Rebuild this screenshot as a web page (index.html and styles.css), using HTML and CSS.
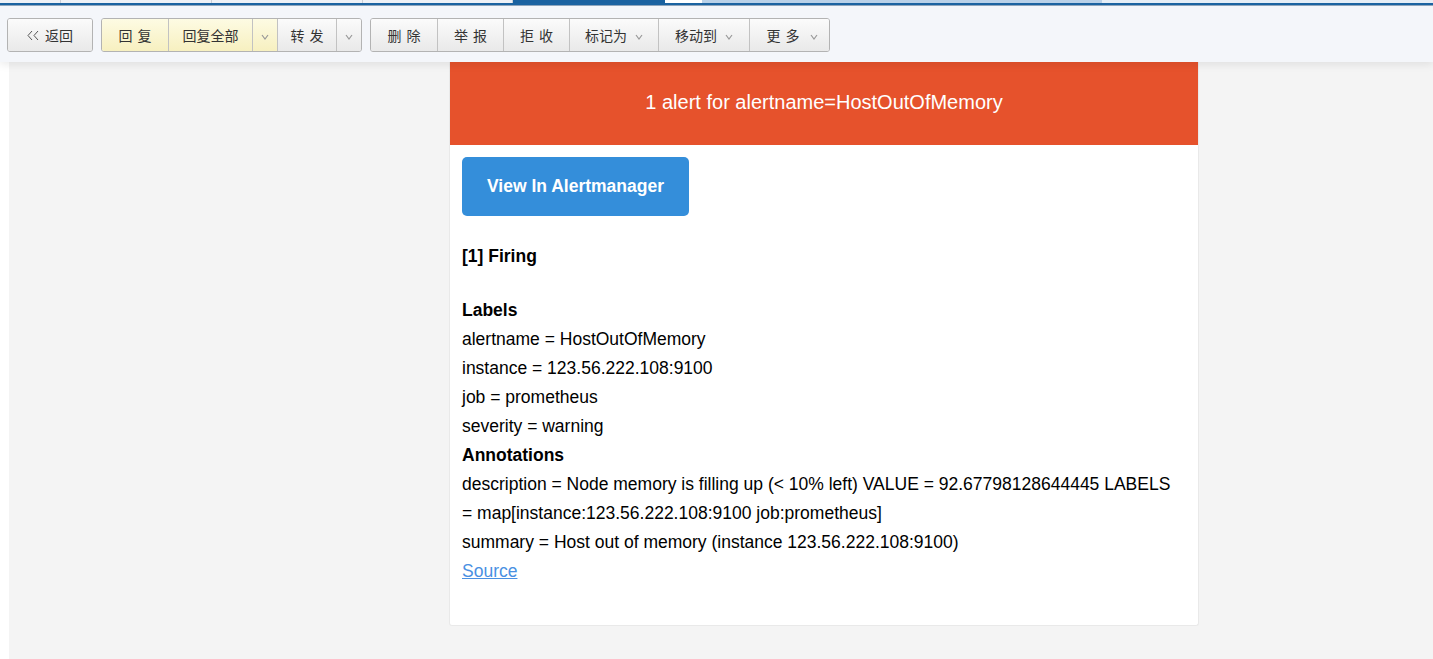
FILE: index.html
```html
<!DOCTYPE html>
<html lang="zh-CN">
<head>
<meta charset="utf-8">
<title>邮件</title>
<link rel="stylesheet" href="styles.css">
</head>
<body>
<div class="topbar">
  <div class="tabs">
    <span class="tab t1"></span>
    <span class="tab t2"></span>
    <span class="tab t3"></span>
    <span class="tab t4"></span>
    <span class="tab active"></span>
    <span class="tab white"></span>
    <span class="tab light"></span>
    <span class="tab rest"></span>
  </div>
  <div class="blueline"></div>
  <div class="toolbar">
    <div class="group">
      <button class="btn back"><svg class="chev" width="12" height="11" viewBox="0 0 12 11"><polyline points="5,1 1,5.5 5,10" fill="none" stroke="#555" stroke-width="1"/><polyline points="11,1 7,5.5 11,10" fill="none" stroke="#555" stroke-width="1"/></svg>返回</button>
    </div>
    <div class="group">
      <button class="btn yellow sp w66">回复</button>
      <button class="btn yellow w84">回复全部</button>
      <button class="btn yellow caret-only w25"><svg class="caret" width="8" height="6" viewBox="0 0 8 6"><polyline points="1,1 4,5 7,1" fill="none" stroke="#999" stroke-width="1.2"/></svg></button>
      <button class="btn sp w59">转发</button>
      <button class="btn caret-only w25"><svg class="caret" width="8" height="6" viewBox="0 0 8 6"><polyline points="1,1 4,5 7,1" fill="none" stroke="#999" stroke-width="1.2"/></svg></button>
    </div>
    <div class="group">
      <button class="btn sp w66">删除</button>
      <button class="btn sp w66">举报</button>
      <button class="btn sp w66">拒收</button>
      <button class="btn w89">标记为<svg class="caret" width="8" height="6" viewBox="0 0 8 6"><polyline points="1,1 4,5 7,1" fill="none" stroke="#999" stroke-width="1.2"/></svg></button>
      <button class="btn w91">移动到<svg class="caret" width="8" height="6" viewBox="0 0 8 6"><polyline points="1,1 4,5 7,1" fill="none" stroke="#999" stroke-width="1.2"/></svg></button>
      <button class="btn sp w80">更多<svg class="caret" width="8" height="6" viewBox="0 0 8 6"><polyline points="1,1 4,5 7,1" fill="none" stroke="#999" stroke-width="1.2"/></svg></button>
    </div>
  </div>
</div>
<div class="main">
  <div class="card">
    <div class="card-head">1 alert for alertname=HostOutOfMemory</div>
    <div class="card-body">
      <a class="cta" href="#">View In Alertmanager</a>
      <p class="firing"><strong>[1] Firing</strong></p>
      <div class="details">
        <strong>Labels</strong><br>
        alertname = HostOutOfMemory<br>
        instance = 123.56.222.108:9100<br>
        job = prometheus<br>
        severity = warning<br>
        <strong>Annotations</strong><br>
        description = Node memory is filling up (&lt; 10% left) VALUE = 92.67798128644445 LABELS = map[instance:123.56.222.108:9100 job:prometheus]<br>
        summary = Host out of memory (instance 123.56.222.108:9100)<br>
        <a class="src" href="#">Source</a>
      </div>
    </div>
  </div>
</div>
</body>
</html>
```
FILE: styles.css
```css
* { box-sizing: border-box; }
html, body { margin: 0; padding: 0; }
body {
  background: #fff;
  font-family: "Liberation Sans", Arial, "Noto Sans CJK SC", sans-serif;
  width: 1433px;
  height: 659px;
  overflow: hidden;
  display: flex;
  flex-direction: column;
}
.topbar {
  position: relative;
  z-index: 2;
  background: #f4f6fa;
  box-shadow: 0 3px 8px rgba(0,0,0,0.08);
}
.tabs { display: flex; height: 3px; background: #eef1f6; }
.tab { height: 3px; border-right: 1px solid #c9ced6; }
.t1 { width: 61px; }
.t2 { width: 151px; }
.t3 { width: 151px; }
.t4 { width: 150px; }
.tab.active { width: 152px; background: #1a62a0; border-right: none; }
.tab.white { width: 37px; background: #fff; border-right: none; }
.tab.light { width: 400px; background: #b9d1e8; border-right: none; }
.tab.rest { flex: 1; background: #e6eef6; border-right: none; }
.blueline {
  height: 3px;
  background: #1b63a1;
  border-bottom: 1px solid #8fa6bd;
}
.toolbar {
  display: flex;
  gap: 8px;
  height: 56px;
  padding: 12px 0 0 7px;
}
.group {
  display: flex;
  height: 34px;
  border: 1px solid #b3b3b3;
  border-radius: 3px;
  overflow: hidden;
}
.btn {
  display: flex;
  align-items: center;
  justify-content: center;
  gap: 8px;
  height: 100%;
  margin: 0;
  padding: 0;
  border: none;
  border-left: 1px solid #c2c2c2;
  background: linear-gradient(#fbfbfb, #e9e9e9);
  font-family: "Noto Sans CJK SC", "Liberation Sans", sans-serif;
  font-size: 14px;
  color: #333;
}
.btn:first-child { border-left: none; }
.btn.yellow { background: linear-gradient(#fdfbe3, #f7f0c0); }
.btn.sp { letter-spacing: 5px; text-indent: 5px; }
.btn.sp .caret { margin-left: -3px; }
.back { width: 84px; gap: 6px; }
.chev { display: block; }
.caret { display: block; margin-top: 3px; }
.w25 { width: 25px; }
.w59 { width: 59px; }
.w66 { width: 66px; }
.w80 { width: 80px; }
.w84 { width: 84px; }
.w89 { width: 89px; }
.w91 { width: 91px; }
.main {
  flex: 1;
  margin-left: 9px;
  background: #f4f4f4;
  padding-left: 440px;
}
.card {
  width: 750px;
  background: #fff;
  border: 1px solid #e9e9e9;
  border-top: none;
  border-radius: 0 0 3px 3px;
}
.card-head {
  height: 83px;
  background: #e6522c;
  color: #fff;
  font-size: 20px;
  display: flex;
  align-items: center;
  justify-content: center;
  padding-bottom: 2px;
}
.card-body {
  padding: 12px 24px 39px 12px;
  font-size: 17.5px;
  line-height: 29px;
  color: #000;
}
.cta {
  display: inline-block;
  background: #348eda;
  color: #fff;
  font-weight: bold;
  text-decoration: none;
  padding: 15px 25px;
  border-radius: 5px;
}
.firing { margin: 26px 0 25px; }
.details { margin: 0; }
.src { color: #4a90e2; text-decoration: underline; }
```
